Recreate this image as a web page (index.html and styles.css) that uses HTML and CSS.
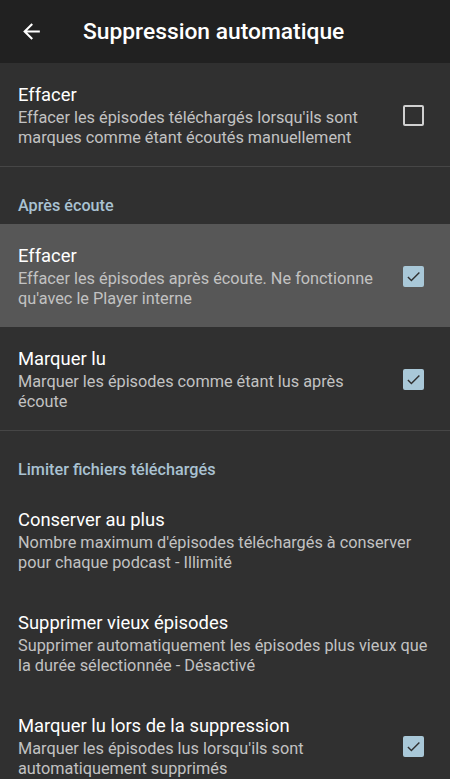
FILE: index.html
```html
<!DOCTYPE html>
<html lang="fr">

<head>
    <meta charset="UTF-8">
    <meta name="viewport" content="width=device-width, initial-scale=1.0">
    <title>Suppression automatique</title>
    <link rel="stylesheet" href="styles.css">
</head>

<body>

    <div class="toolbar">
        <svg class="back" width="24" height="24" viewBox="0 0 24 24">
            <path d="M20 11H7.83l5.59-5.59L12 4l-8 8 8 8 1.41-1.41L7.83 13H20v-2z" fill="#fff"/>
        </svg>
        <h1>Suppression automatique</h1>
    </div>

    <div class="section">
        <div class="pref">
            <div class="text">
                <div class="title">Effacer</div>
                <div class="summary">Effacer les épisodes téléchargés lorsqu'ils sont marques comme étant écoutés manuellement</div>
            </div>
            <span class="box"></span>
        </div>
    </div>

    <div class="section">
        <div class="category">Après écoute</div>
        <div class="pref pressed">
            <div class="text">
                <div class="title">Effacer</div>
                <div class="summary">Effacer les épisodes après écoute. Ne fonctionne qu'avec le Player interne</div>
            </div>
            <span class="box checked"></span>
        </div>
        <div class="pref">
            <div class="text">
                <div class="title">Marquer lu</div>
                <div class="summary">Marquer les épisodes comme étant lus après écoute</div>
            </div>
            <span class="box checked"></span>
        </div>
    </div>

    <div class="section last">
        <div class="category">Limiter fichiers téléchargés</div>
        <div class="pref">
            <div class="text">
                <div class="title">Conserver au plus</div>
                <div class="summary">Nombre maximum d'épisodes téléchargés à conserver pour chaque podcast - Illimité</div>
            </div>
        </div>
        <div class="pref">
            <div class="text">
                <div class="title">Supprimer vieux épisodes</div>
                <div class="summary">Supprimer automatiquement les épisodes plus vieux que la durée sélectionnée - Désactivé</div>
            </div>
        </div>
        <div class="pref">
            <div class="text">
                <div class="title">Marquer lu lors de la suppression</div>
                <div class="summary">Marquer les épisodes lus lorsqu'ils sont automatiquement supprimés</div>
            </div>
            <span class="box checked"></span>
        </div>
    </div>

</body>

</html>
```

FILE: styles.css
```css
body {
    margin: 0;
    background-color: #303030;
    font-family: Roboto, "Noto Sans", sans-serif;
    color: #fff;
    overflow: hidden;
}

.toolbar {
    height: 63px;
    background-color: #212121;
    display: flex;
    align-items: center;
    padding-left: 19px;
}

.back {
    width: 25px;
    height: 25px;
}

.toolbar h1 {
    margin: 0 0 0 39px;
    font-size: 22.8px;
    font-weight: 500;
}

.section {
    border-bottom: 1px solid #464646;
}

.section.last {
    border-bottom: none;
}

.category {
    height: 57px;
    box-sizing: border-box;
    padding: 29px 18px 0;
    font-size: 16.2px;
    font-weight: 500;
    color: #a9c2d2;
}

.pref {
    min-height: 103px;
    box-sizing: border-box;
    padding: 20px 18px 19px;
    display: flex;
    align-items: center;
}

.pref.pressed {
    background-color: #575757;
}

.text {
    flex: 1;
}

.title {
    font-size: 18.4px;
    line-height: 24px;
}

.summary {
    margin-top: 1px;
    font-size: 16.3px;
    line-height: 19.5px;
    color: #c2c2c2;
}

.box {
    flex: none;
    width: 17px;
    height: 17px;
    margin: 0 8px 0 18px;
    border: 2px solid #d0d0d0;
    border-radius: 2px;
}

.box.checked {
    border-color: #a9c8d8;
    background-color: #a9c8d8;
    background-image: url("data:image/svg+xml,%3Csvg xmlns='http://www.w3.org/2000/svg' viewBox='0 0 24 24'%3E%3Cpath d='M9 16.2L4.8 12l-1.4 1.4L9 19 21 7l-1.4-1.4L9 16.2z' fill='%23303030'/%3E%3C/svg%3E");
    background-size: 17px 17px;
    background-position: center;
}
```
